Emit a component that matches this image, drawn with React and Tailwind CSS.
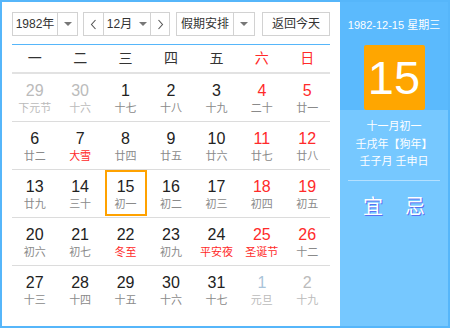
const weekdays = ["一", "二", "三", "四", "五", "六", "日"];

// [day, lunar, kind] kind: o = other month, r = red day, h = holiday text, s = selected
const weeks = [
  [["29", "下元节", "o"], ["30", "十六", "o"], ["1", "十七"], ["2", "十八"], ["3", "十九"], ["4", "二十", "r"], ["5", "廿一", "r"]],
  [["6", "廿二"], ["7", "大雪", "h"], ["8", "廿四"], ["9", "廿五"], ["10", "廿六"], ["11", "廿七", "r"], ["12", "廿八", "r"]],
  [["13", "廿九"], ["14", "三十"], ["15", "初一", "s"], ["16", "初二"], ["17", "初三"], ["18", "初四", "r"], ["19", "初五", "r"]],
  [["20", "初六"], ["21", "初七"], ["22", "冬至", "h"], ["23", "初九"], ["24", "平安夜", "h"], ["25", "圣诞节", "rh"], ["26", "十二", "r"]],
  [["27", "十三"], ["28", "十四"], ["29", "十五"], ["30", "十六"], ["31", "十七"], ["1", "元旦", "ob"], ["2", "十九", "o"]],
];

const Caret = () => (
  <span className="inline-block w-0 h-0 border-l-[4px] border-r-[4px] border-t-[4px] border-l-transparent border-r-transparent border-t-[#777]" />
);

const Chevron = ({ dir }) => (
  <svg width="7" height="11" viewBox="0 0 7 11" fill="none" stroke="#555" strokeWidth="1.1">
    {dir === "left" ? <path d="M5.5 1 L1.5 5.5 L5.5 10" /> : <path d="M1.5 1 L5.5 5.5 L1.5 10" />}
  </svg>
);

const Cell = ({ day, lunar, kind = "" }) => {
  let numColor = "text-[#222]";
  let lunarColor = "text-[#8a8a8a]";
  if (kind.includes("o")) {
    numColor = "text-[#bbbbbb]";
    lunarColor = "text-[#bbbbbb]";
  }
  if (kind === "ob") numColor = "text-[#a9c3d9]";
  if (kind.includes("r")) numColor = "text-[#ff2a2a]";
  if (kind.includes("h")) lunarColor = "text-[#ff2a2a]";
  const selected = kind === "s";
  return (
    <div className="h-[47px] flex justify-center">
      <div
        className={`w-[42px] h-[46px] flex flex-col items-center ${
          selected ? "border-2 border-[#ffa200] pt-[5px]" : "pt-[7px]"
        }`}
      >
        <div className={`text-[16px] leading-[19px] ${numColor}`}>{day}</div>
        <div className={`text-[11px] leading-[16px] whitespace-nowrap ${lunarColor}`}>{lunar}</div>
      </div>
    </div>
  );
};

export default function App() {
  return (
    <div
      className="w-[450px] h-[330px] bg-white"
      style={{ fontFamily: '"Liberation Sans", "Noto Sans CJK SC", sans-serif' }}
    >
      <div className="h-[328px] border-2 border-[#56b6fa] flex">
        {/* Calendar */}
        <div className="w-[338px] pl-[10px] pr-[8px] pt-[10px]">
          <div className="flex h-[24px] text-[12px] text-[#333]">
            <div className="w-[66px] flex border border-[#d2d2d2]">
              <div className="flex-1 flex items-center justify-center">1982年</div>
              <div className="w-[20px] border-l border-[#d2d2d2] flex items-center justify-center">
                <Caret />
              </div>
            </div>
            <div className="w-[87px] ml-[5px] flex border border-[#d2d2d2]">
              <div className="w-[19px] flex items-center justify-center">
                <Chevron dir="left" />
              </div>
              <div className="flex-1 border-l border-r border-[#d2d2d2] flex items-center justify-center gap-[7px]">
                12月 <Caret />
              </div>
              <div className="w-[18px] flex items-center justify-center">
                <Chevron dir="right" />
              </div>
            </div>
            <div className="w-[79px] ml-[6px] flex border border-[#d2d2d2]">
              <div className="flex-1 flex items-center justify-center">假期安排</div>
              <div className="w-[21px] border-l border-[#d2d2d2] flex items-center justify-center">
                <Caret />
              </div>
            </div>
            <div className="w-[68px] ml-[7px] border border-[#d2d2d2] flex items-center justify-center">
              返回今天
            </div>
          </div>

          <div className="w-[318px] mt-[8px] h-px bg-[#56b6fa]" />
          <div className="w-[318px] grid grid-cols-7 h-[29px] items-center text-[14px] border-b-2 border-[#e2e2e2]">
            {weekdays.map((w, i) => (
              <div key={w} className={`text-center ${i > 4 ? "text-[#ff2a2a]" : "text-[#333]"}`}>
                {w}
              </div>
            ))}
          </div>

          <div className="w-[318px]">
            {weeks.map((week, r) => (
              <div
                key={r}
                className={`grid grid-cols-7 ${r < weeks.length - 1 ? "border-b border-[#dcdcdc]" : ""}`}
              >
                {week.map(([d, l, k], i) => (
                  <Cell key={i} day={d} lunar={l} kind={k} />
                ))}
              </div>
            ))}
          </div>
        </div>

        {/* Side panel */}
        <div className="flex-1 flex flex-col text-white">
          <div className="bg-[#5bbafd] h-[108px] flex flex-col items-center pt-[16px]">
            <div className="text-[11px] leading-[15px]">1982-12-15 星期三</div>
            <div className="mt-[12px] w-[61px] h-[65px] rounded-[2px] bg-[#ffa600] flex items-center justify-center text-[47px] font-light leading-none">
              15
            </div>
          </div>
          <div className="flex-1 bg-[#76c8ff] flex flex-col items-center pt-[8px] text-[11px] leading-[17.5px]">
            <div>十一月初一</div>
            <div>壬戌年【狗年】</div>
            <div>壬子月 壬申日</div>
            <div className="w-[92px] h-px bg-[#b4e0ff] mt-[9px]" />
            <div className="w-full flex justify-around px-[12px] mt-[14px] text-[20px] leading-[24px] [text-shadow:1px_1px_0_#5a6ff0]">
              <span>宜</span>
              <span>忌</span>
            </div>
          </div>
        </div>
      </div>
    </div>
  );
}
